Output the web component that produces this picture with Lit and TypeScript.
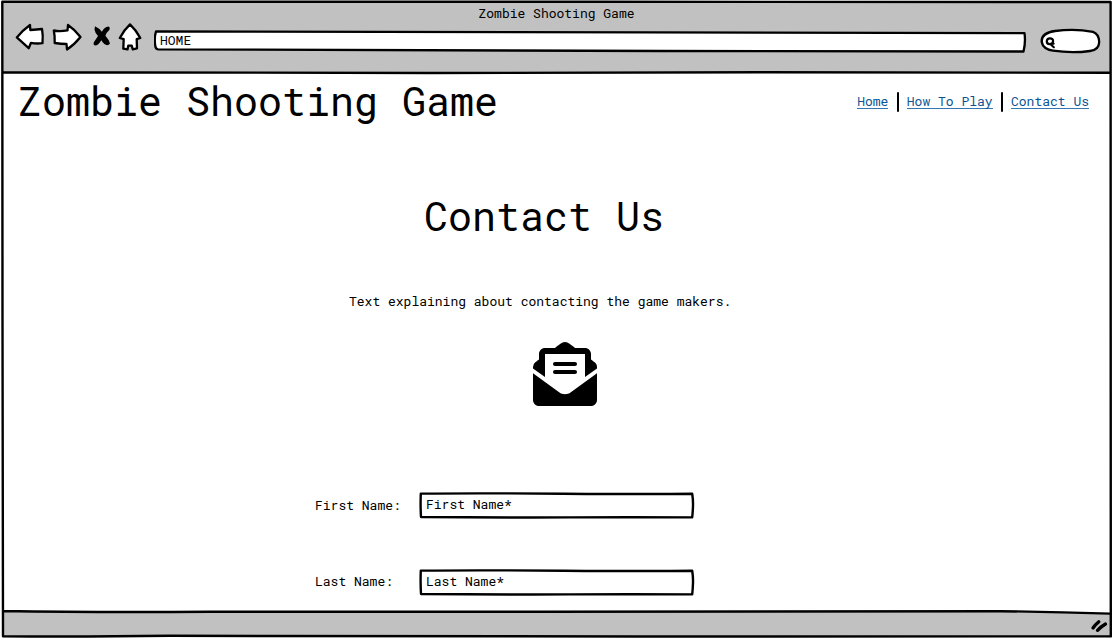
import { LitElement, html, css } from 'lit';
import { customElement, property } from 'lit/decorators.js';

/** Hand-drawn text field with a wobbly outline. */
@customElement('sketch-input')
class SketchInput extends LitElement {
  @property() value = '';

  static styles = css`
    :host { display: block; width: 276px; height: 28px; }
    .field { display: grid; width: 276px; height: 28px; }
    .field > * { grid-area: 1 / 1; }
    .outline { fill: #fff; stroke: #000; stroke-width: 2.4; stroke-linejoin: round; }
    .value { padding-left: 7.5px; line-height: 25px; white-space: pre; }
  `;

  render() {
    return html`<div class="field">
      <svg width="276" height="28" viewBox="0 0 276 28">
        <path class="outline" d="M1.800 1.6Q60 1.1 145 1.7T273.2 1.800Q274.2 8 274 14T273.2 25.4Q210 25 150 25.4Q75 25.600 2 25Q1.300 13 1.800 1.6Z" />
      </svg>
      <span class="value">${this.value}</span>
    </div>`;
  }
}

@customElement('app-root')
class AppRoot extends LitElement {
  static styles = css`
    :host {
      display: block; width: 1113px; height: 639px; overflow: hidden; background: #fff;
      font: 13px/17px "Roboto Mono", "Liberation Mono", monospace; color: #000;
    }
    .window { position: relative; height: 639px; display: flex; flex-direction: column; }
    .frame { position: absolute; inset: 0; }
    .frame-fill { fill: #c1c1c1; }
    .frame-line { fill: none; stroke: #000; stroke-width: 2.4; stroke-linejoin: round; stroke-linecap: round; }
    .chrome { position: relative; height: 73px; display: flex; flex-direction: column; }
    .title { height: 22px; padding-top: 5px; box-sizing: border-box; text-align: center; }
    .toolbar { display: flex; height: 34px; padding-left: 14px; }
    .sketch { fill: #fff; stroke: #000; stroke-width: 2.3; stroke-linejoin: round; stroke-linecap: round; }
    .ink { fill: none; stroke: #000; stroke-linecap: round; }
    .address { display: grid; width: 874px; margin-left: 8px; }
    .address > * { grid-area: 1 / 1; }
    .url { padding: 10px 0 0 6px; }
    .search { margin-left: 12px; }
    .page { position: relative; flex: 1; display: flex; flex-direction: column; }
    .banner { display: flex; justify-content: space-between; height: 57px; padding: 0 24px 0 18px; }
    h1, h2, p { margin: 0; font-weight: 400; }
    h1, h2 { font-size: 40px; line-height: 52px; white-space: pre; }
    h1 { padding-top: 2px; }
    nav { display: flex; padding-top: 19px; }
    nav a { color: #0b5394; height: 16px; line-height: 19px; border-bottom: 1px solid #3475b0; }
    .divider { width: 2px; height: 20px; margin: 0 8.2px; background: #000; border-radius: 1px; }
    h2 { margin: 60px 0 0 424px; }
    .intro { margin: 51px 0 0 349px; }
    .mail { display: block; margin: 32px 0 0 533px; }
    .form { display: flex; flex-direction: column; gap: 49px; padding: 85.5px 0 0 315px; }
    .row { display: flex; }
    .label { width: 103.5px; line-height: 26px; }
    .row:last-child .label { line-height: 25px; }
    .status { position: relative; height: 28px; display: flex; justify-content: flex-end; }
  `;

  render() {
    return html`<div class="window">
      <svg class="frame" width="1113" height="639" viewBox="0 0 1113 639">
        <path class="frame-fill" d="M2 2H1110V73H2ZM3 611.5Q500 613 1000 611L1110 613.5V636H3Z" />
        <path class="frame-line" d="M2.3 1.8Q300 2.3 600 1.8T1110.6 2Q1111.2 160 1110.7 330T1110.8 636.4Q900 637 640 636.5Q400 635.4 170 635.8Q80 637 3 636.3Q2.2 470 2.5 320T2.3 1.8ZM3 72.2Q150 73.2 430 73T760 72.3Q930 71.8 1110 72.8M3 611Q90 612.4 210 611.7T540 611.8Q820 611 1000 611.2Q1055 611.8 1110 613.6" />
      </svg>
      <header class="chrome">
        <div class="title">Zombie Shooting Game</div>
        <div class="toolbar">
          <svg width="132" height="34" viewBox="14 22 132 34">
            <path class="sketch" d="M16.8 37.4Q23 30 30 25L30.3 30Q37 29.6 42 29Q43.2 35 42.5 43.2Q36 44 31 42.8L28.7 48.2Q23 43 16.8 37.4Z" />
            <path class="sketch" d="M53.8 30.5Q60 31.8 67.5 30.3L68 25Q75 29.7 80.5 37Q74 45 67 49.5L66.5 44Q61 44 54.7 43Q55 36 53.8 30.5Z" />
            <path d="M95 26.2Q99 28 101.9 31.800Q104.5 27 108.3 26.6Q110.600 27.4 109.300 30Q106.4 32.5 105.4 35.800Q109.200 40 110 43.5Q107.8 46.5 104.3 44Q102.6 42.200 101.3 40.300Q98.5 45 95.800 45.600Q92.5 45.200 94 42L98 36Q95 33 94.500 29.500Z" />
            <path class="sketch" d="M130 24.4Q136 30 140.3 38L136.7 39.2L137 48.4L132.8 49.400L131.700 45.6H128.3L127.5 49.4L123.3 48.7L123.7 39.2L119.8 38Q124 30 130 24.4Z" />
          </svg>
          <div class="address">
            <svg width="874" height="34" viewBox="154 22 874 34">
              <path class="sketch" d="M156 31.5Q390 31.3 650 32.3T1024.5 33.2Q1025.8 42 1023.5 51.5Q850 52 660 51T158 49.3Q155.7 49 155.3 46Q154 38 156 31.5Z" />
            </svg>
            <span class="url">HOME</span>
          </div>
          <svg class="search" width="64" height="34" viewBox="1040 22 64 34">
            <path class="sketch" d="M1041.7 42Q1041 33 1055 31Q1075 28.5 1093 31.8Q1099 34 1099.2 42Q1099 50 1090 51Q1072 53.5 1053 50.7Q1043 49 1041.7 42Z" />
            <path class="ink" stroke-width="2.2" d="M1049.800 38.400Q1053.200 38.300 1053.100 41.200Q1052.800 44.300 1049.600 44.200Q1046.700 43.900 1046.800 41.200Q1047 38.500 1049.800 38.400M1050.600 44.300L1053.800 47.200M1051.500 44L1053.600 43.700" />
          </svg>
        </div>
      </header>
      <main class="page">
        <div class="banner">
          <h1>Zombie Shooting Game</h1>
          <nav>
            <a>Home</a><span class="divider"></span><a>How To Play</a><span class="divider"></span><a>Contact Us</a>
          </nav>
        </div>
        <h2>Contact Us</h2>
        <p class="intro">Text explaining about contacting the game makers.</p>
        <svg class="mail" width="64" height="64" viewBox="0 0 512 512">
          <path d="M176 192h160c8.840 0 16-7.160 16-16s-7.160-16-16-16H176c-8.840 0-16 7.160-16 16s7.160 16 16 16zm0 64h160c8.840 0 16-7.160 16-16s-7.160-16-16-16H176c-8.840 0-16 7.160-16 16s7.160 16 16 16z" />
          <path d="M256 417.100c-16.380 0-32.880-4.100-46.880-15.120L0 250.860V464c0 26.510 21.490 48 48 48h416c26.510 0 48-21.490 48-48V250.860L302.880 401.980c-14 11.020-30.500 15.120-46.880 15.120zm237.610-254.180c-8.850-6.940-17.240-13.470-29.610-22.810V96c0-26.510-21.490-48-48-48h-77.550c-3.040-2.200-5.870-4.260-9.040-6.560C312.600 29.170 279.200-.35 256 0c-23.200-.35-56.590 29.170-73.410 41.440-3.170 2.300-6 4.360-9.040 6.560H96c-26.510 0-48 21.490-48 48v44.110c-12.370 9.330-20.760 15.870-29.610 22.810A47.995 47.995 0 0 0 0 200.720v10.650l96 69.350V96h320v184.720l96-69.350v-10.650c0-14.740-6.780-28.670-18.390-37.800z" />
        </svg>
        <div class="form">
          <div class="row"><span class="label">First Name:</span><sketch-input value="First Name*"></sketch-input></div>
          <div class="row"><span class="label">Last Name:</span><sketch-input value="Last Name*"></sketch-input></div>
        </div>
      </main>
      <footer class="status">
        <svg width="24" height="28" viewBox="1089 611 24 28">
          <path class="ink" stroke-width="3.3" d="M1093 628Q1095 625 1098.8 621.8M1097.500 630.300Q1100.500 627 1105.5 624" />
        </svg>
      </footer>
    </div>`;
  }
}
